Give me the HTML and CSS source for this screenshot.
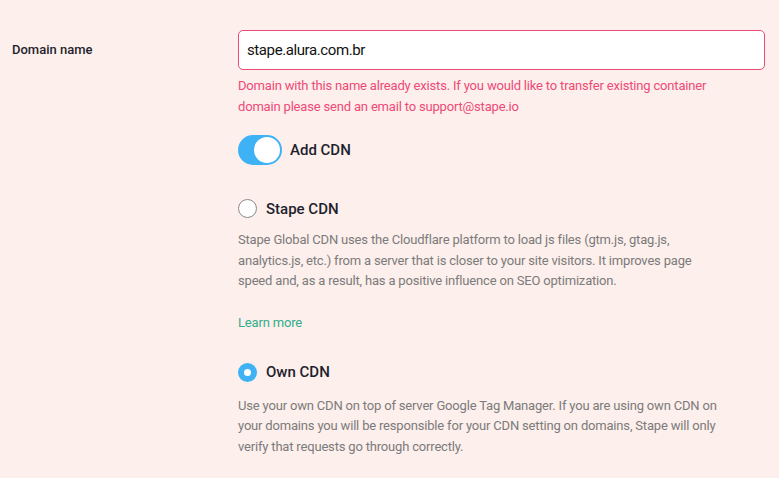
FILE: index.html
```html
<!DOCTYPE html>
<html lang="en">
<head>
    <meta charset="UTF-8">
    <meta name="viewport" content="width=device-width, initial-scale=1.0">
    <title>Domain settings</title>
    <link rel="stylesheet" href="styles.css">
</head>
<body>
    <div class="row">
        <label class="row-label" for="domain">Domain name</label>
        <div class="row-field">
            <input class="text-input error" type="text" id="domain" value="stape.alura.com.br">
            <p class="error-text">Domain with this name already exists. If you would like to transfer existing container domain please send an email to support@stape.io</p>

            <label class="switch-row">
                <span class="switch on"><span class="knob"></span></span>
                <span class="switch-text">Add CDN</span>
            </label>

            <div class="option">
                <label class="radio-row">
                    <span class="radio"></span>
                    <span class="radio-text">Stape CDN</span>
                </label>
                <p class="option-desc">Stape Global CDN uses the Cloudflare platform to load js files (gtm.js, gtag.js, analytics.js, etc.) from a server that is closer to your site visitors. It improves page speed and, as a result, has a positive influence on SEO optimization.</p>
                <a class="learn-more" href="#">Learn more</a>
            </div>

            <div class="option">
                <label class="radio-row">
                    <span class="radio checked"></span>
                    <span class="radio-text">Own CDN</span>
                </label>
                <p class="option-desc">Use your own CDN on top of server Google Tag Manager. If you are using own CDN on your domains you will be responsible for your CDN setting on domains, Stape will only verify that requests go through correctly.</p>
            </div>
        </div>
    </div>
</body>
</html>
```

FILE: styles.css
```css
body {
    margin: 0;
    background-color: #fdefeb;
    font-family: Roboto, "Segoe UI", Arial, sans-serif;
    color: #1f1f2e;
}
.row {
    display: flex;
    padding: 30px 14px 0 12px;
}
.row-label {
    width: 226px;
    flex-shrink: 0;
    font-size: 13px;
    font-weight: 500;
    line-height: 40px;
}
.row-field {
    flex: 1;
}
.text-input {
    display: block;
    box-sizing: border-box;
    width: 100%;
    height: 40px;
    padding: 0 8px;
    font-family: inherit;
    font-size: 15px;
    letter-spacing: -0.4px;
    color: #111;
    background: #fff;
    border: 1px solid #ccc;
    border-radius: 5px;
    outline: none;
}
.text-input.error {
    border-color: #ee4a78;
}
.error-text {
    max-width: 490px;
    margin: 5px 0 0;
    font-size: 13px;
    line-height: 21px;
    letter-spacing: -0.18px;
    color: #ee4a78;
}
.switch-row {
    display: flex;
    align-items: center;
    gap: 8px;
    margin-top: 18px;
}
.switch {
    position: relative;
    width: 44px;
    height: 30px;
    border-radius: 15px;
    background: #3eb2f5;
}
.switch .knob {
    position: absolute;
    top: 2px;
    right: 2px;
    width: 26px;
    height: 26px;
    border-radius: 50%;
    background: #fff;
}
.switch-text {
    font-size: 15px;
    font-weight: 500;
}
.option {
    margin-top: 34px;
}
.option + .option {
    margin-top: 32px;
}
.radio-row {
    display: flex;
    align-items: center;
    gap: 9px;
}
.radio {
    box-sizing: border-box;
    width: 19px;
    height: 19px;
    border-radius: 50%;
    border: 1px solid #8a8a8a;
    background: #fff;
}
.radio.checked {
    border: 6px solid #3eb2f5;
}
.radio-text {
    font-size: 15px;
    font-weight: 500;
}
.option-desc {
    max-width: 490px;
    margin: 12px 0 0;
    font-size: 13px;
    line-height: 20.5px;
    letter-spacing: -0.18px;
    color: #7b7b7b;
}
.option + .option .option-desc {
    margin-top: 14px;
}
.learn-more {
    display: inline-block;
    margin-top: 23px;
    font-size: 13px;
    letter-spacing: -0.18px;
    color: #2fae8b;
    text-decoration: none;
}
```
